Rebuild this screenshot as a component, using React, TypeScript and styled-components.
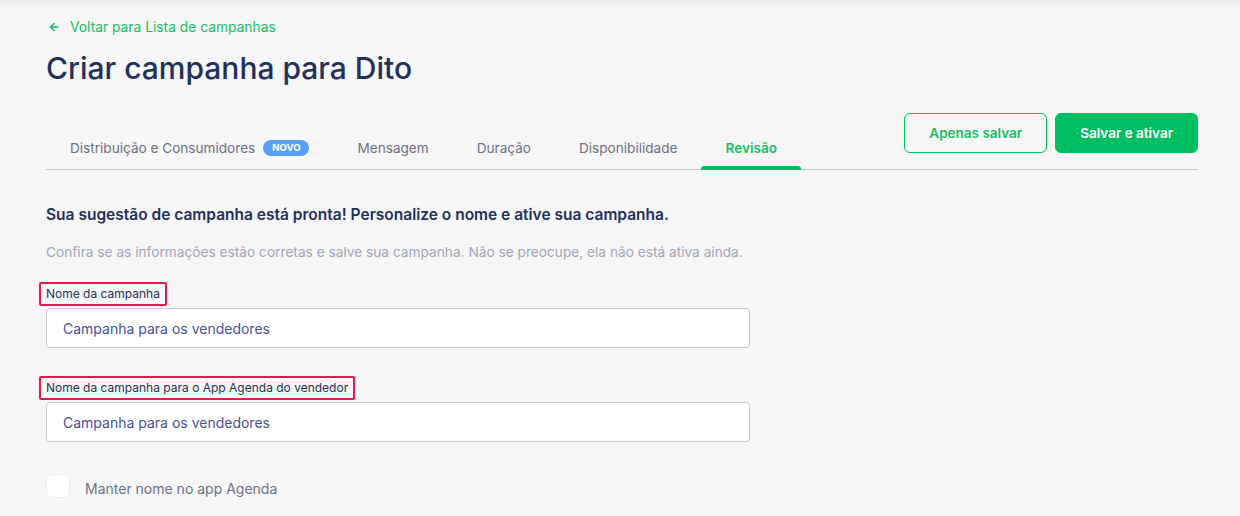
import React from "react";
import styled, { createGlobalStyle } from "styled-components";

const GlobalStyle = createGlobalStyle`
  * { box-sizing: border-box; }
  html, body { margin: 0; padding: 0; }
  body {
    background: #f6f6f6;
    font-family: "Inter", "Noto Sans", sans-serif;
    color: #22305a;
  }
`;

const Page = styled.div`
  min-height: 516px;
  padding: 18px 42px 0 46px;
  box-shadow: inset 0 8px 8px -6px rgba(0, 0, 0, 0.08);
`;

const BackLink = styled.a`
  display: flex;
  align-items: center;
  gap: 10px;
  padding-left: 2px;
  font-size: 13.8px;
  color: #17bf66;
  text-decoration: none;
  height: 18px;
`;

const Title = styled.h1`
  margin: 14px 0 0;
  font-size: 30px;
  font-weight: 500;
  line-height: 36px;
  color: #22305a;
`;

const TabBar = styled.div`
  display: flex;
  align-items: flex-end;
  justify-content: space-between;
  margin-top: 27px;
  border-bottom: 1px solid #c6c7cf;
`;

const Tabs = styled.div`
  display: flex;
`;

const Tab = styled.div<{ $active?: boolean }>`
  position: relative;
  display: flex;
  align-items: center;
  gap: 8px;
  height: 40px;
  padding: 0 24px 2px;
  font-size: 13.6px;
  font-weight: ${(p) => (p.$active ? 600 : 400)};
  color: ${(p) => (p.$active ? "#17bf66" : "#6e7185")};

  &::after {
    content: "";
    display: ${(p) => (p.$active ? "block" : "none")};
    position: absolute;
    left: 0;
    right: 0;
    bottom: -1px;
    height: 4px;
    border-radius: 3px 3px 0 0;
    background: #00bf63;
  }
`;

const Badge = styled.span`
  display: inline-block;
  height: 16px;
  line-height: 16px;
  padding: 0 9px;
  border-radius: 8px;
  background: #579ffb;
  color: #fff;
  font-size: 9.5px;
  font-weight: 700;
`;

const Actions = styled.div`
  display: flex;
  gap: 8px;
  margin-bottom: 16px;
`;

const Button = styled.button<{ $primary?: boolean }>`
  height: 40px;
  padding: 0 24px;
  border-radius: 6px;
  border: 1px solid #00bf63;
  background: ${(p) => (p.$primary ? "#00bf63" : "transparent")};
  color: ${(p) => (p.$primary ? "#ffffff" : "#17bf66")};
  font-family: inherit;
  font-size: 13.5px;
  font-weight: 600;
  cursor: pointer;
`;

const Heading = styled.h2`
  margin: 35px 0 0;
  font-size: 15.5px;
  font-weight: 600;
  line-height: 20px;
  color: #22305a;
`;

const Hint = styled.p`
  margin: 17px 0 0;
  font-size: 13.7px;
  line-height: 20px;
  color: #a2a5b4;
`;

const Field = styled.div<{ $gap: number }>`
  display: flex;
  flex-direction: column;
  align-items: flex-start;
  width: 704px;
  margin-top: ${(p) => p.$gap}px;
`;

const Label = styled.label`
  margin-left: -7px;
  padding: 3px 5px;
  border: 2px solid #e5194b;
  border-radius: 2px;
  font-size: 12px;
  line-height: 14px;
  color: #2a3152;
`;

const Input = styled.input`
  width: 100%;
  height: 40px;
  margin-top: 2px;
  padding: 0 16px;
  border: 1px solid #c6c7d6;
  border-radius: 4px;
  background: #fff;
  font-family: inherit;
  font-size: 14px;
  color: #4a4f9b;
  outline: none;
`;

const CheckRow = styled.label`
  display: flex;
  align-items: center;
  gap: 16px;
  margin-top: 33px;
  font-size: 14px;
  color: #6e7185;
`;

const CheckText = styled.span`
  padding-top: 4px;
`;

const Box = styled.span`
  width: 22px;
  height: 22px;
  margin-left: 1px;
  border-radius: 5px;
  background: #fff;
  box-shadow: 0 0 0 1px #efeff2;
`;

function ArrowLeft() {
  return (
    <svg width="12" height="12" viewBox="0 0 12 12" fill="none">
      <path
        d="M10 6H2.5M6 2.5L2.5 6 6 9.5"
        stroke="#17bf66"
        strokeWidth="1.6"
        strokeLinecap="round"
        strokeLinejoin="round"
      />
    </svg>
  );
}

export default function App() {
  return (
    <>
      <GlobalStyle />
      <Page>
        <BackLink href="#">
          <ArrowLeft />
          Voltar para Lista de campanhas
        </BackLink>
        <Title>Criar campanha para Dito</Title>

        <TabBar>
          <Tabs>
            <Tab>
              Distribuição e Consumidores <Badge>NOVO</Badge>
            </Tab>
            <Tab>Mensagem</Tab>
            <Tab>Duração</Tab>
            <Tab>Disponibilidade</Tab>
            <Tab $active>Revisão</Tab>
          </Tabs>
          <Actions>
            <Button>Apenas salvar</Button>
            <Button $primary>Salvar e ativar</Button>
          </Actions>
        </TabBar>

        <Heading>
          Sua sugestão de campanha está pronta! Personalize o nome e ative sua
          campanha.
        </Heading>
        <Hint>
          Confira se as informações estão corretas e salve sua campanha. Não se
          preocupe, ela não está ativa ainda.
        </Hint>

        <Field $gap={20}>
          <Label>Nome da campanha</Label>
          <Input defaultValue="Campanha para os vendedores" />
        </Field>

        <Field $gap={28}>
          <Label>Nome da campanha para o App Agenda do vendedor</Label>
          <Input defaultValue="Campanha para os vendedores" />
        </Field>

        <CheckRow>
          <Box />
          <CheckText>Manter nome no app Agenda</CheckText>
        </CheckRow>
      </Page>
    </>
  );
}
